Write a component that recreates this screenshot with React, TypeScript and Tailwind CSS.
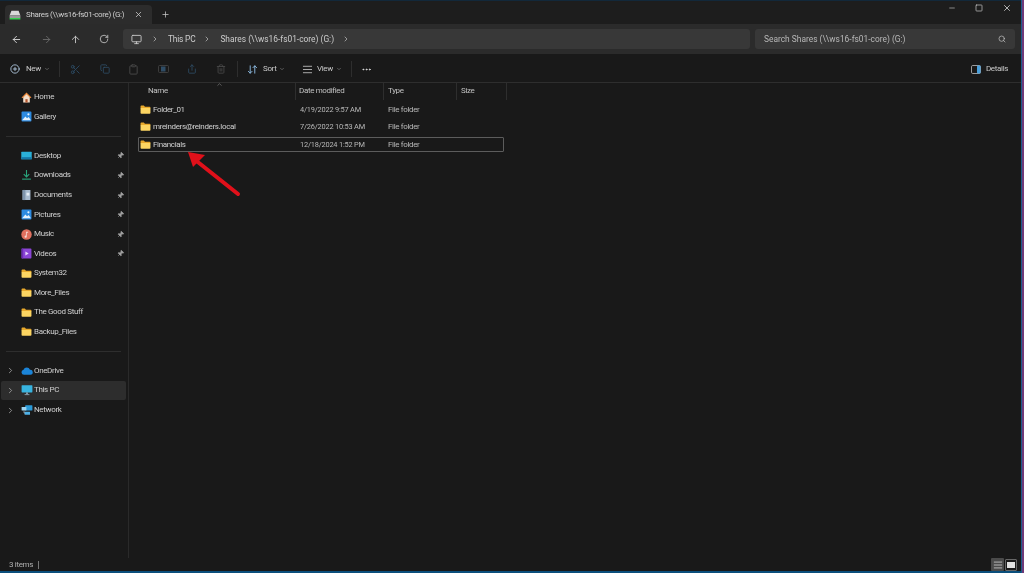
import React from "react";
import { ArrowLeft, ArrowRight, ArrowUp, RotateCw, Monitor, ChevronRight, ChevronDown, ChevronUp, Search, CirclePlus, Scissors, Copy, Clipboard, Share, Trash2, ArrowDownUp, AlignJustify, Ellipsis, X, Plus, Minus, Pin, Square } from "lucide-react";

const Folder = ({ w = 11 }: { w?: number }) => (
  <svg width={w} height={w * 0.85} viewBox="0 0 20 17" className="shrink-0">
    <path d="M1 2.5C1 1.5 1.7 1 2.5 1H7l2 2h8.5c1 0 1.5.7 1.500 1.500V6H1z" fill="#e8a92c" />
    <path d="M1 5.500h18V14.500c0 .9-.6 1.500-1.500 1.500h-15C1.600 16 1 15.400 1 14.500z" fill="#fcd562" />
  </svg>
);

const Home = () => (
  <svg width="11" height="11" viewBox="0 0 20 20">
    <path d="M4 9v10h12V9L10 3z" fill="#f3ddc8" />
    <path d="M8 19v-6h4v6z" fill="#b4552d" />
    <path d="M1 10 10 1l9 9-1.500 1.500L10 4l-7.500 7.500z" fill="#ef8a3c" />
  </svg>
);
const Picture = () => (
  <svg width="11" height="11" viewBox="0 0 20 20">
    <rect x="1" y="1" width="18" height="18" rx="1.500" fill="#2c8ae0" />
    <path d="M2 17l6-7 3 3 3-2 4 6z" fill="#e4f1fb" />
    <circle cx="13.500" cy="6" r="2" fill="#e4f1fb" />
  </svg>
);
const Desktop = () => (
  <svg width="11" height="9" viewBox="0 0 20 16">
    <rect x="0.500" y="1" width="19" height="14" rx="1" fill="#2ab0d8" />
    <rect x="0.500" y="11" width="19" height="4" fill="#1578a8" />
  </svg>
);
const Download = () => (
  <svg width="11" height="12" viewBox="0 0 20 20">
    <path d="M10 1v12M5 8.500l5 5 5-5" stroke="#2aa57c" strokeWidth="2" fill="none" />
    <rect x="2" y="16.500" width="16" height="2" fill="#2aa57c" />
  </svg>
);
const Docs = () => (
  <svg width="9" height="12" viewBox="0 0 16 20">
    <rect x="1" y="1" width="14" height="18" rx="1" fill="#a9bcd0" />
    <path d="M1 1h5v18H1z" fill="#7f95ad" />
    <rect x="8" y="6" width="5" height="5" fill="#e5edf5" />
  </svg>
);
const Music = () => (
  <svg width="11" height="11" viewBox="0 0 20 20">
    <circle cx="10" cy="10" r="9.500" fill="#e0705f" />
    <path d="M9 5h4v2h-2.500v7a2 2 0 1 1-1.500-2z" fill="#f5d8d2" />
  </svg>
);
const Videos = () => (
  <svg width="11" height="11" viewBox="0 0 20 20">
    <rect x="1" y="1" width="18" height="18" rx="1.500" fill="#8b45d6" />
    <path d="M8 6.500l6 3.500-6 3.500z" fill="#e8d8fa" />
    <rect x="1" y="1" width="3" height="18" fill="#6a2cb0" />
  </svg>
);
const Cloud = () => (
  <svg width="12" height="8" viewBox="0 0 24 15">
    <path d="M6 15a5 5 0 0 1-1-9.900A7 7 0 0 1 18 5a5 5 0 0 1 1 10z" fill="#1b84d8" />
  </svg>
);
const ThisPc = () => (
  <svg width="12" height="12" viewBox="0 0 20 20">
    <rect x="1" y="2" width="18" height="12" rx="1" fill="#38b4e0" />
    <rect x="8.500" y="14" width="3" height="3" fill="#8aa4b4" />
    <rect x="6" y="17" width="8" height="1.500" fill="#8aa4b4" />
  </svg>
);
const Network = () => (
  <svg width="12" height="12" viewBox="0 0 20 20">
    <rect x="7" y="2" width="12" height="9" rx="1" fill="#2a9ad8" />
    <rect x="1" y="5" width="8" height="6" rx="1" fill="#9fd6f2" />
    <rect x="6" y="13" width="9" height="5" rx="0.500" fill="#4db0e6" />
    <path d="M5 11v4h2" stroke="#c8d4dc" fill="none" />
  </svg>
);
const Drive = () => (
  <svg width="12" height="10" viewBox="0 0 20 16">
    <path d="M4 1h12l3 8H1z" fill="#d8d8d8" />
    <rect x="1" y="9" width="18" height="4" fill="#9a9a9a" />
    <rect x="1" y="13" width="18" height="2.500" fill="#35d04f" />
  </svg>
);

type Item = { label?: string; icon?: React.ReactNode; pin?: boolean; chevron?: boolean; active?: boolean };
const side: Item[] = [
  { label: "Home", icon: <Home /> },
  { label: "Gallery", icon: <Picture /> },
  {},
  { label: "Desktop", icon: <Desktop />, pin: true },
  { label: "Downloads", icon: <Download />, pin: true },
  { label: "Documents", icon: <Docs />, pin: true },
  { label: "Pictures", icon: <Picture />, pin: true },
  { label: "Music", icon: <Music />, pin: true },
  { label: "Videos", icon: <Videos />, pin: true },
  { label: "System32", icon: <Folder /> },
  { label: "More_Files", icon: <Folder /> },
  { label: "The Good Stuff", icon: <Folder /> },
  { label: "Backup_Files", icon: <Folder /> },
  {},
  { label: "OneDrive", icon: <Cloud />, chevron: true },
  { label: "This PC", icon: <ThisPc />, chevron: true, active: true },
  { label: "Network", icon: <Network />, chevron: true },
];

const files = [
  { n: "Folder_01", d: "4/19/2022 9:57 AM" },
  { n: "mreinders@reinders.local", d: "7/26/2022 10:53 AM" },
  { n: "Financials", d: "12/18/2024 1:52 PM", sel: true },
];

export default function App() {
  return (
    <div className="relative flex h-[573px] w-[1024px] overflow-hidden bg-[#191919] text-[8px] tracking-[-0.35px] text-[#d8d8d8] blur-[0.25px] [font-family:'Roboto','Noto_Sans',sans-serif]">
      <div className="flex min-w-0 flex-1 flex-col">
        {/* Title bar */}
        <div className="flex h-[24px] shrink-0 items-end border-t border-[#12283a] bg-[#1d1d1d] pl-[5px]">
          <div className="flex h-[19px] w-[147px] items-center rounded-t-[4px] bg-[#2c2c2c] pl-[4px]">
            <Drive />
            <span className="ml-[5px] whitespace-nowrap text-[#cfcfcf]">Shares (\\ws16-fs01-core) (G:)</span>
            <X size={9} className="ml-auto mr-[9px] shrink-0 text-[#d0d0d0]" />
          </div>
          <Plus size={9} className="mb-[5px] ml-[9px] text-[#c8c8c8]" />
          <div className="mb-[11px] ml-auto flex items-center gap-[19px] pr-[9px]">
            <Minus size={8} className="text-[#c0c0c0]" />
            <Square size={8} className="text-[#d0d0d0]" />
            <X size={10} className="text-[#d0d0d0]" />
          </div>
        </div>

        {/* Address row */}
        <div className="flex h-[30px] shrink-0 items-center bg-[#2b2b2b] pl-[11px] pr-[6px] text-[8.4px] tracking-normal">
          <ArrowLeft size={11} className="text-[#d8d8d8]" />
          <ArrowRight size={11} className="ml-[19px] text-[#6a6a6a]" />
          <ArrowUp size={11} className="ml-[18px] text-[#c8c8c8]" />
          <RotateCw size={10} className="ml-[18px] text-[#c8c8c8]" />
          <div className="ml-[14px] flex h-[20px] w-[627px] items-center rounded-[3px] bg-[#383838] pl-[8px]">
            <Monitor size={11} className="text-[#c8c8c8]" />
            <ChevronRight size={8} className="ml-[9px] text-[#c8c8c8]" />
            <span className="ml-[9px] whitespace-nowrap tracking-[-0.2px] text-[#cccccc]">This PC</span>
            <ChevronRight size={8} className="ml-[8px] text-[#c8c8c8]" />
            <span className="ml-[9px] whitespace-nowrap text-[#cccccc]">Shares (\\ws16-fs01-core) (G:)</span>
            <ChevronRight size={8} className="ml-[8px] text-[#c8c8c8]" />
          </div>
          <div className="ml-[5px] flex h-[20px] flex-1 items-center justify-between rounded-[3px] bg-[#383838] px-[9px]">
            <span className="whitespace-nowrap text-[#b8b8b8]">Search Shares (\\ws16-fs01-core) (G:)</span>
            <Search size={8} className="text-[#c8c8c8]" />
          </div>
        </div>

        {/* Toolbar */}
        <div className="flex h-[29px] shrink-0 items-center border-b border-[#2e2e2e] bg-[#191919] pl-[10px] pr-[13px] pt-[2px]">
          <CirclePlus size={10} className="text-[#b9d3ea]" />
          <span className="ml-[6px] text-[#c8c8c8]">New</span>
          <ChevronDown size={6} className="ml-[3px] text-[#999999]" />
          <div className="ml-[9px] mr-[10px] h-[16px] w-px bg-[#2e2e2e]" />
          <Scissors size={11} className="text-[#2c4a64]" />
          <Copy size={10} className="ml-[18.7px] text-[#2f4d66]" />
          <Clipboard size={11} className="ml-[18.7px] text-[#4a4a4a]" />
          <svg width="11" height="10" viewBox="0 0 22 20" className="ml-[18.5px]" fill="none">
            <rect x="1" y="3" width="20" height="14" rx="2" stroke="#4a4a4a" strokeWidth="1.500" />
            <rect x="6" y="5" width="9" height="10" fill="#2f4d66" />
          </svg>
          <Share size={10} className="ml-[18.5px] text-[#2f4d66]" />
          <Trash2 size={10} className="ml-[18.7px] text-[#4a4a4a]" />
          <div className="ml-[11px] mr-[9px] h-[16px] w-px bg-[#2e2e2e]" />
          <ArrowDownUp size={11} className="text-[#8fc0e8]" />
          <span className="ml-[5px] text-[#c8c8c8]">Sort</span>
          <ChevronDown size={6} className="ml-[3px] text-[#999999]" />
          <AlignJustify size={11} className="ml-[16.5px] text-[#b8b8b8]" />
          <span className="ml-[4px] text-[#c8c8c8]">View</span>
          <ChevronDown size={6} className="ml-[3px] text-[#999999]" />
          <div className="ml-[9px] mr-[9px] h-[16px] w-px bg-[#2e2e2e]" />
          <Ellipsis size={11} className="text-[#e0e0e0]" />
          <svg width="10" height="9" viewBox="0 0 20 18" className="ml-auto" fill="none">
            <rect x="1" y="1" width="18" height="16" rx="2.500" stroke="#c8c8c8" strokeWidth="1.500" />
            <rect x="12" y="1" width="7" height="16" rx="1.500" fill="#4aa0dc" />
          </svg>
          <span className="ml-[5px] text-[#c8c8c8]">Details</span>
        </div>

        {/* Body */}
        <div className="flex min-h-0 flex-1">
          <div className="w-[129px] shrink-0 border-r border-[#2a2a2a] pl-px pr-[2px] pt-[4.5px]">
            {side.map((it, i) =>
              it.label ? (
                <div
                  key={i}
                  className={
                    it.active
                      ? "flex h-[19.55px] items-center rounded-[2px] bg-[#2d2d2d]"
                      : "flex h-[19.55px] items-center"
                  }
                >
                  <div className="flex w-[19px] shrink-0 justify-center">
                    {it.chevron && <ChevronRight size={9} className="text-[#b0b0b0]" />}
                  </div>
                  <div className="flex w-[13px] shrink-0 justify-center">{it.icon}</div>
                  <span className="ml-[1px] whitespace-nowrap text-[#d0d0d0]">{it.label}</span>
                  {it.pin && <Pin size={7} className="ml-auto mr-[2px] rotate-45 fill-[#a0a0a0] text-[#a0a0a0]" />}
                </div>
              ) : (
                <div key={i} className="flex h-[19.55px] items-center px-[5px]">
                  <div className="h-px w-full bg-[#2e2e2e]" />
                </div>
              )
            )}
          </div>

          <div className="min-w-0 flex-1">
            <div className="relative flex h-[17px] items-stretch text-[#c0c0c0]">
              <div className="w-[167px] shrink-0 border-r border-[#2e2e2e] pl-[19px] pt-[2px]">Name</div>
              <div className="w-[88px] shrink-0 border-r border-[#2e2e2e] pl-[3px] pt-[2px]">Date modified</div>
              <div className="w-[73px] shrink-0 border-r border-[#2e2e2e] pl-[4px] pt-[2px]">Type</div>
              <div className="w-[50px] shrink-0 border-r border-[#2e2e2e] pl-[4px] pt-[2px]">Size</div>
              <ChevronUp size={7} className="absolute left-[87px] top-[-2px] text-[#8a8a8a]" />
            </div>
            <div className="pl-[9px] pt-[2px]">
              {files.map((f) => (
                <div
                  key={f.n}
                  className={
                    f.sel
                      ? "mt-[2.500px] flex h-[15px] w-[366px] items-center rounded-[1px] border border-[#5c5c5c] pl-[1px]"
                      : "mb-[2.500px] flex h-[15px] w-[366px] items-center pl-[2px]"
                  }
                >
                  <Folder />
                  <span className="ml-[2px] w-[147px] shrink-0 whitespace-nowrap leading-[12px] text-[#d0d0d0]">{f.n}</span>
                  <span className="w-[88px] shrink-0 whitespace-nowrap text-[7.4px] leading-[12px] tracking-[-0.2px] text-[#b8b8b8]">{f.d}</span>
                  <span className="whitespace-nowrap leading-[12px] text-[#b8b8b8]">File folder</span>
                </div>
              ))}
            </div>
          </div>
        </div>

        {/* Status bar */}
        <div className="flex h-[13px] shrink-0 items-center pl-[9px] pr-[4px] text-[#b0b0b0]">
          <span>3 items</span>
          <div className="ml-[5px] h-[8px] w-px bg-[#777777]" />
          <div className="ml-auto flex h-[13px] w-[13px] items-center justify-center rounded-[1px] bg-[#4a4a4a]">
            <AlignJustify size={10} className="text-[#cccccc]" />
          </div>
          <div className="ml-[1px] flex h-[12px] w-[12px] items-center justify-center rounded-[1px] border border-[#666666]">
            <div className="h-[6px] w-[8px] bg-[#e0e0e0]" />
          </div>
        </div>
        <div className="h-[2px] shrink-0 bg-[#0b4f7c]" />
      </div>

      {/* Desktop wallpaper showing past the window edge */}
      <div className="w-[3px] shrink-0 border-l border-[#1d5a8c] bg-[#6e3a78]" />

      {/* Annotation arrow */}
      <svg className="pointer-events-none absolute left-[180px] top-[145px]" width="70" height="60" viewBox="0 0 70 60" fill="none">
        <path d="M58 49 14 14" stroke="#e0101a" strokeWidth="4" strokeLinecap="round" />
        <path d="M8 7 25 10 13 22z" fill="#e0101a" />
      </svg>
    </div>
  );
}
